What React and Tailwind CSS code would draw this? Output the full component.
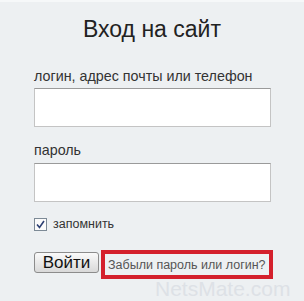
export default function App() {
  return (
    <div className="relative w-[304px] h-[301px] overflow-hidden bg-[#edf0f2] border-t-2 border-[#f6f8f9] font-['Liberation_Sans',Arial,sans-serif]">
      <h1 className="mt-[15px] text-center text-[23px] leading-[25px] text-[#222]">Вход на сайт</h1>
      <div className="pl-[34px]">
        <div className="mt-[25px] text-[14.3px] leading-[18px] text-[#333]">логин, адрес почты или телефон</div>
        <div className="mt-[3px] w-[237px] h-[39px] bg-white border border-[#c4c4c4] border-t-[#9a9a9a]"></div>
        <div className="mt-[14px] text-[14.3px] leading-[18px] text-[#333]">пароль</div>
        <div className="mt-[4px] w-[237px] h-[39px] bg-white border border-[#c4c4c4] border-t-[#9a9a9a]"></div>
        <div className="mt-[16px] flex items-center h-[13px]">
          <svg width="13" height="13" viewBox="0 0 13 13">
            <rect x="0.5" y="0.5" width="12" height="12" fill="#fbfbfb" stroke="#7d8a96" />
            <path d="M3 6.5 L5.5 9.5 L10 3" fill="none" stroke="#2c3f73" strokeWidth="1.6" />
          </svg>
          <span className="ml-[6px] text-[12.5px] leading-[13px] text-[#333]">запомнить</span>
        </div>
        <div className="mt-[19px] flex items-start">
          <button className="mt-[2px] w-[65px] h-[21px] rounded-[3px] border border-[#8c8c8c] bg-gradient-to-b from-[#fafafa] to-[#d9d9d9] text-[17px] leading-[19px] text-[#111] p-0">Войти</button>
          <div className="ml-[2px] w-[172px] h-[29px] border-[4px] border-[#d4202c] flex items-center pl-[3px] text-[12.5px] leading-[14px] text-[#555]">Забыли пароль или логин?</div>
        </div>
      </div>
      <div className="absolute left-[155px] top-[276px] text-[21px] leading-[22px] text-[#dde1e6]">NetsMate.com</div>
    </div>
  );
}
